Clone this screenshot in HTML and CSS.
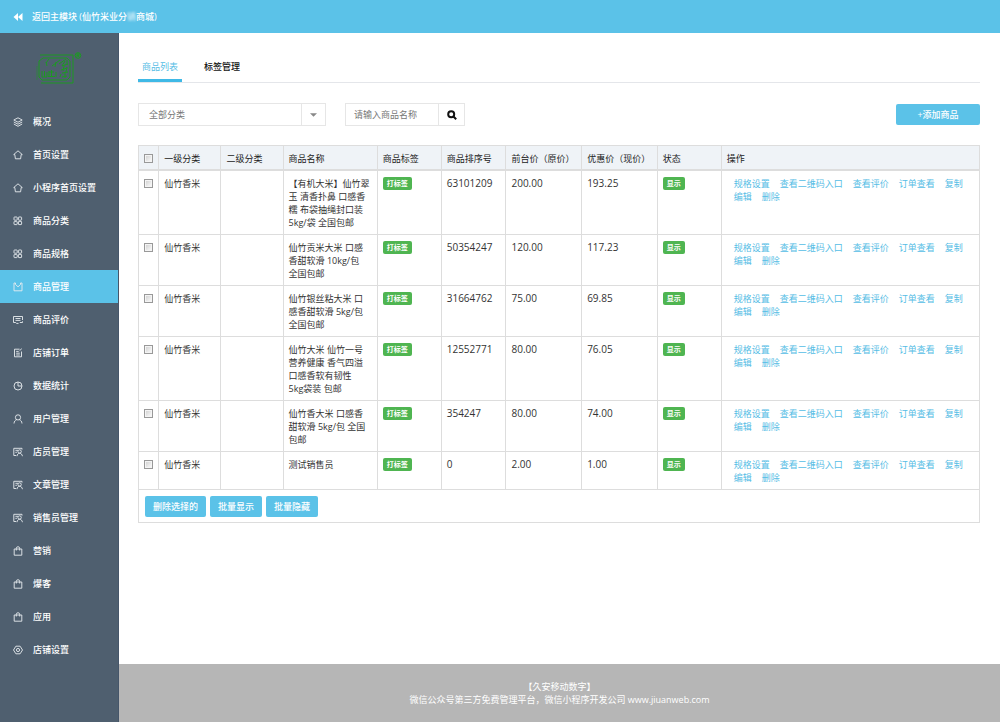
FILE: index.html
```html
<!DOCTYPE html>
<html lang="zh-CN">
<head>
<meta charset="utf-8">
<meta name="viewport" content="width=device-width, initial-scale=1">
<title>商品管理</title>
<link rel="stylesheet" href="styles.css">
</head>
<body>
<svg class="sprite" aria-hidden="true">
  <symbol id="i-layers" viewBox="0 0 10 10"><path d="M5 .8 9.200 3 5 5.200.8 3zM.8 5 5 7.200 9.200 5M.8 7 5 9.300 9.200 7"/></symbol>
  <symbol id="i-home" viewBox="0 0 10 10"><path d="M5 .8 9.300 4.600H8.200L7.600 8.800H2.400L1.800 4.600H.7z"/></symbol>
  <symbol id="i-grid" viewBox="0 0 10 10"><rect x="1" y="1" width="3.200" height="3.200" rx=".6"/><rect x="5.400" y="1" width="3.200" height="3.200" rx=".6"/><rect x="1" y="5.400" width="3.200" height="3.200" rx=".6"/><rect x="5.400" y="5.400" width="3.200" height="3.200" rx=".6"/></symbol>
  <symbol id="i-goods" viewBox="0 0 10 10"><path d="M2.500 1H1v7.800h8V1H7.500M2.500 1v1.500L5 4.800l2.500-2.300V1"/></symbol>
  <symbol id="i-comment" viewBox="0 0 10 10"><path d="M9.500 5V1.500H.5v6h2.200l.8.900h2M2.500 3.500h5M2.500 5.400h5M6.800 7.500h2.700V6.300"/></symbol>
  <symbol id="i-order" viewBox="0 0 10 10"><path d="M6.600 1.200H1.500v7.600h7V3.500M3.200 3.400h2.500M3.200 5.200h3.600M3.200 7h3.600M6.600 2.600 8.800.7"/></symbol>
  <symbol id="i-chart" viewBox="0 0 10 10"><circle cx="5" cy="5" r="4"/><path d="M5 1v4h4"/></symbol>
  <symbol id="i-user" viewBox="0 0 10 10"><circle cx="5" cy="3.400" r="2.600"/><path d="M1 9.500C1.200 7.400 2.200 6 3.700 5.700M9 9.500C8.800 7.400 7.800 6 6.300 5.700"/></symbol>
  <symbol id="i-staff" viewBox="0 0 10 10"><path d="M9 2.600V1.300H.8v7.200h2.400M2.400 3.300h2.600M2.400 5.300h1.500"/><circle cx="6.600" cy="4.500" r="1.700"/><path d="M4 9.200c.2-1.700 1-2.800 2.600-3C8.200 6.400 9.200 7.500 9.400 9.200"/></symbol>
  <symbol id="i-bag" viewBox="0 0 10 10"><path d="M1.200 3h7.600v6.200H1.200zM3.300 4.500V2.600a1.700 1.900 0 0 1 3.400 0v1.900"/></symbol>
  <symbol id="i-gear" viewBox="0 0 10 10"><path d="M2.900 1.200h4.200L9.500 5 7.100 8.800H2.900L.5 5z"/><circle cx="5" cy="5" r="1.600"/></symbol>
</svg>

<header class="topbar">
  <a class="back" href="#">
    <svg class="back-icon" viewBox="0 0 10 10" aria-hidden="true"><path d="M5 1v8L.5 5zM9.500 1v8L5 5z"/></svg>
    <span>返回主模块 (仙竹米业分<span class="masked">销</span>商城)</span>
  </a>
</header>

<div class="shell">
  <aside class="sidebar">
    <div class="brand">
      <svg class="logo" viewBox="0 0 48 36" role="img" aria-label="仙竹">
        <path d="M5 4h33v28H6"/>
        <path class="faint" d="M2 15v14"/>
        <path d="M8 7h24l3 3v16l-3 3H7l-3-3V10z"/>
        <path class="brush" d="M14 8l-3 4M11 11l1 4M25 9l-8 6M21 11l-1 5M31 8l-7 5M30 10l-3 5M32 9v5M27 15l6-2M26 19l6-2M29 15l-1 5M32 16l-1 5M27 22l6-1M30 21v6M27 26l5-1M26 23l-1 3"/>
        <path d="M7 20v6M9.500 20v6M7 26h5v-5M14 20v5M14 21h5M16.500 19v7M13 25.500h7M21 21v5"/>
        <circle cx="43" cy="4.500" r="2.800"/><path d="M42 6V3h2v1.500h-2M43 4.500l1 1.500"/>
      </svg>
    </div>
    <nav>
      <a class="item" href="#"><svg><use href="#i-layers"/></svg>概况</a>
      <a class="item" href="#"><svg><use href="#i-home"/></svg>首页设置</a>
      <a class="item" href="#"><svg><use href="#i-home"/></svg>小程序首页设置</a>
      <a class="item" href="#"><svg><use href="#i-grid"/></svg>商品分类</a>
      <a class="item" href="#"><svg><use href="#i-grid"/></svg>商品规格</a>
      <a class="item active" href="#" aria-current="page"><svg><use href="#i-goods"/></svg>商品管理</a>
      <a class="item" href="#"><svg><use href="#i-comment"/></svg>商品评价</a>
      <a class="item" href="#"><svg><use href="#i-order"/></svg>店铺订单</a>
      <a class="item" href="#"><svg><use href="#i-chart"/></svg>数据统计</a>
      <a class="item" href="#"><svg><use href="#i-user"/></svg>用户管理</a>
      <a class="item" href="#"><svg><use href="#i-staff"/></svg>店员管理</a>
      <a class="item" href="#"><svg><use href="#i-staff"/></svg>文章管理</a>
      <a class="item" href="#"><svg><use href="#i-staff"/></svg>销售员管理</a>
      <a class="item" href="#"><svg><use href="#i-bag"/></svg>营销</a>
      <a class="item" href="#"><svg><use href="#i-bag"/></svg>爆客</a>
      <a class="item" href="#"><svg><use href="#i-bag"/></svg>应用</a>
      <a class="item" href="#"><svg><use href="#i-gear"/></svg>店铺设置</a>
    </nav>
  </aside>

  <div class="page">
    <main class="content">
      <nav class="tabs">
        <a class="tab current" href="#">商品列表</a>
        <a class="tab" href="#">标签管理</a>
      </nav>

      <form class="filters">
        <div class="picker">
          <select aria-label="商品分类"><option>全部分类</option></select>
          <svg class="caret" viewBox="0 0 8 4" aria-hidden="true"><path d="M0 0h8L4 4z"/></svg>
        </div>
        <div class="search">
          <input type="text" placeholder="请输入商品名称" aria-label="商品名称">
          <button type="button" aria-label="搜索"><svg viewBox="0 0 10 10"><circle cx="4.200" cy="4.200" r="3"/><path d="M6.500 6.500 9.200 9.200"/></svg></button>
        </div>
        <button type="button" class="btn add">+添加商品</button>
      </form>

      <table class="goods">
        <colgroup>
          <col class="c-check"><col class="c-cat"><col class="c-cat"><col class="c-name"><col class="c-tag"><col class="c-sort"><col class="c-price"><col class="c-price"><col class="c-state"><col>
        </colgroup>
        <thead>
          <tr>
            <th><input type="checkbox" aria-label="全选"></th>
            <th>一级分类</th><th>二级分类</th><th>商品名称</th><th>商品标签</th><th>商品排序号</th><th>前台价（原价）</th><th>优惠价（现价）</th><th>状态</th><th>操作</th>
          </tr>
        </thead>
        <tbody>
          <tr>
            <td><input type="checkbox" aria-label="选择商品 63101209"></td>
            <td>仙竹香米</td><td></td>
            <td>【有机大米】仙竹翠<br>玉 清香扑鼻 口感香<br>糯 布袋抽绳封口装<br>5kg/袋 全国包邮</td>
            <td><a class="badge" href="#">打标签</a></td>
            <td class="num">63101209</td><td class="num">200.00</td><td class="num">193.25</td>
            <td><a class="badge" href="#">显示</a></td>
            <td><div class="ops"><a href="#">规格设置</a><a href="#">查看二维码入口</a><a href="#">查看评价</a><a href="#">订单查看</a><a href="#">复制</a><a href="#">编辑</a><a href="#">删除</a></div></td>
          </tr>
          <tr>
            <td><input type="checkbox" aria-label="选择商品 50354247"></td>
            <td>仙竹香米</td><td></td>
            <td>仙竹贡米大米 口感<br>香甜软滑 10kg/包<br>全国包邮</td>
            <td><a class="badge" href="#">打标签</a></td>
            <td class="num">50354247</td><td class="num">120.00</td><td class="num">117.23</td>
            <td><a class="badge" href="#">显示</a></td>
            <td><div class="ops"><a href="#">规格设置</a><a href="#">查看二维码入口</a><a href="#">查看评价</a><a href="#">订单查看</a><a href="#">复制</a><a href="#">编辑</a><a href="#">删除</a></div></td>
          </tr>
          <tr>
            <td><input type="checkbox" aria-label="选择商品 31664762"></td>
            <td>仙竹香米</td><td></td>
            <td>仙竹银丝粘大米 口<br>感香甜软滑 5kg/包<br>全国包邮</td>
            <td><a class="badge" href="#">打标签</a></td>
            <td class="num">31664762</td><td class="num">75.00</td><td class="num">69.85</td>
            <td><a class="badge" href="#">显示</a></td>
            <td><div class="ops"><a href="#">规格设置</a><a href="#">查看二维码入口</a><a href="#">查看评价</a><a href="#">订单查看</a><a href="#">复制</a><a href="#">编辑</a><a href="#">删除</a></div></td>
          </tr>
          <tr>
            <td><input type="checkbox" aria-label="选择商品 12552771"></td>
            <td>仙竹香米</td><td></td>
            <td>仙竹大米 仙竹一号<br>营养健康 香气四溢<br>口感香软有韧性<br>5kg袋装 包邮</td>
            <td><a class="badge" href="#">打标签</a></td>
            <td class="num">12552771</td><td class="num">80.00</td><td class="num">76.05</td>
            <td><a class="badge" href="#">显示</a></td>
            <td><div class="ops"><a href="#">规格设置</a><a href="#">查看二维码入口</a><a href="#">查看评价</a><a href="#">订单查看</a><a href="#">复制</a><a href="#">编辑</a><a href="#">删除</a></div></td>
          </tr>
          <tr>
            <td><input type="checkbox" aria-label="选择商品 354247"></td>
            <td>仙竹香米</td><td></td>
            <td>仙竹香大米 口感香<br>甜软滑 5kg/包 全国<br>包邮</td>
            <td><a class="badge" href="#">打标签</a></td>
            <td class="num">354247</td><td class="num">80.00</td><td class="num">74.00</td>
            <td><a class="badge" href="#">显示</a></td>
            <td><div class="ops"><a href="#">规格设置</a><a href="#">查看二维码入口</a><a href="#">查看评价</a><a href="#">订单查看</a><a href="#">复制</a><a href="#">编辑</a><a href="#">删除</a></div></td>
          </tr>
          <tr>
            <td><input type="checkbox" aria-label="选择商品 0"></td>
            <td>仙竹香米</td><td></td>
            <td>测试销售员</td>
            <td><a class="badge" href="#">打标签</a></td>
            <td class="num">0</td><td class="num">2.00</td><td class="num">1.00</td>
            <td><a class="badge" href="#">显示</a></td>
            <td><div class="ops"><a href="#">规格设置</a><a href="#">查看二维码入口</a><a href="#">查看评价</a><a href="#">订单查看</a><a href="#">复制</a><a href="#">编辑</a><a href="#">删除</a></div></td>
          </tr>
        </tbody>
        <tfoot>
          <tr><td colspan="10"><div class="bulk"><button type="button" class="btn">删除选择的</button><button type="button" class="btn">批量显示</button><button type="button" class="btn">批量隐藏</button></div></td></tr>
        </tfoot>
      </table>
    </main>
    <footer class="footer">
      <p>【久安移动数字】</p>
      <p>微信公众号第三方免费管理平台，微信小程序开发公司 www.jiuanweb.com</p>
    </footer>
  </div>
</div>
</body>
</html>
```
FILE: styles.css
```css
* { box-sizing: border-box; }

body {
  display: flex;
  flex-direction: column;
  min-height: 100vh;
  margin: 0;
  background: #fff;
  color: #333;
  font: 9px/13px "Open Sans", "Noto Sans CJK SC", sans-serif;
}

a { color: #55bde5; text-decoration: none; }
p { margin: 0; }
button, input, select { font: inherit; color: inherit; }
button { cursor: pointer; }
.sprite { display: none; }

.topbar {
  display: flex;
  align-items: center;
  height: 33px;
  padding: 0 13px;
  background: #5bc2e8;
}
.back { display: flex; align-items: center; gap: 9px; color: #fff; font-weight: 500; }
.back-icon { width: 10px; height: 10px; fill: #fff; }
.masked { filter: blur(1px); opacity: .8; }

.shell { display: flex; flex: 1; }

.sidebar { width: 119px; flex: none; background: #4f5f6f; border-right: 1px solid #46566a; }
.brand { display: flex; align-items: center; justify-content: center; height: 72px; }
.logo { width: 48px; height: 36px; fill: none; stroke: #1c9a22; stroke-width: 1; }
.logo .faint { opacity: .5; }
.item {
  display: flex;
  align-items: center;
  gap: 10px;
  height: 33px;
  padding-left: 13px;
  color: #fff;
  font-weight: 500;
}
.item svg { width: 10px; height: 10px; fill: none; stroke: #e8ecef; stroke-width: .9; }
.item.active { background: #5bc2e8; }

.page { display: flex; flex: 1; flex-direction: column; min-width: 0; }
.content { flex: 1; padding: 20px 20px 20px 19px; }

.tabs { display: flex; gap: 18px; border-bottom: 1px solid #e4e6ea; }
.tab { padding: 7px 4px 6px; border-bottom: 3px solid transparent; color: #111; font-weight: 500; }
.tab.current { border-color: #3fb9e6; color: #55bde5; font-weight: 400; }

.filters { display: flex; align-items: center; margin: 20px 0 19px; color: #777; }
.picker { display: flex; width: 188px; align-items: center; border: 1px solid #e6e6e6; }
.picker select { flex: 1; height: 21px; padding: 0 10px; border: 0; border-right: 1px solid #e6e6e6; background: none; appearance: none; }
.caret { width: 7px; height: 4px; margin: 0 8px; fill: #888; }
.search { display: flex; margin-left: 19px; border: 1px solid #e6e6e6; }
.search input { width: 93px; height: 21px; padding: 0 8px; border: 0; border-right: 1px solid #e6e6e6; }
.search input::placeholder { color: #777; opacity: 1; }
.search button { display: flex; align-items: center; justify-content: center; width: 25px; padding: 0; border: 0; background: none; }
.search svg { width: 10px; height: 10px; fill: none; stroke: #111; stroke-width: 2; }
.btn { height: 21px; padding: 0 8px; border: 0; border-radius: 2px; background: #5bc2e8; color: #fff; font-weight: 500; }
.add { width: 84px; margin-left: auto; }

.goods { width: 100%; table-layout: fixed; border-collapse: collapse; }
.c-check { width: 2.4%; }
.c-cat { width: 7.4%; }
.c-name { width: 11.2%; }
.c-tag, .c-state { width: 7.6%; }
.c-sort { width: 7.7%; }
.c-price { width: 9%; }
.goods th, .goods td { padding: 6px 5px 5px; border: 1px solid #ddd; text-align: left; vertical-align: top; font-weight: 400; white-space: nowrap; }
.goods th { padding-bottom: 4px; border-bottom-width: 2px; background: #eff3f7; color: #222; }
.goods .num { font-size: 10px; }
.goods input { display: block; appearance: none; width: 9px; height: 9px; margin: 2px 0; border: 1px solid #999; background: linear-gradient(135deg, #ccc, #fff); box-shadow: inset 0 0 0 1px #f4f4f4; }
.badge { display: block; width: fit-content; padding: 0 4px; border-radius: 2px; background: #4fb551; color: #fff; font-size: 7px; font-weight: 700; }
.ops { display: flex; flex-wrap: wrap; column-gap: 10px; padding-left: 7px; }
.bulk { display: flex; gap: 4px; padding-left: 1px; }

.footer { padding: 16px 0; background: #b6b6b6; color: #fff; text-align: center; }
```
